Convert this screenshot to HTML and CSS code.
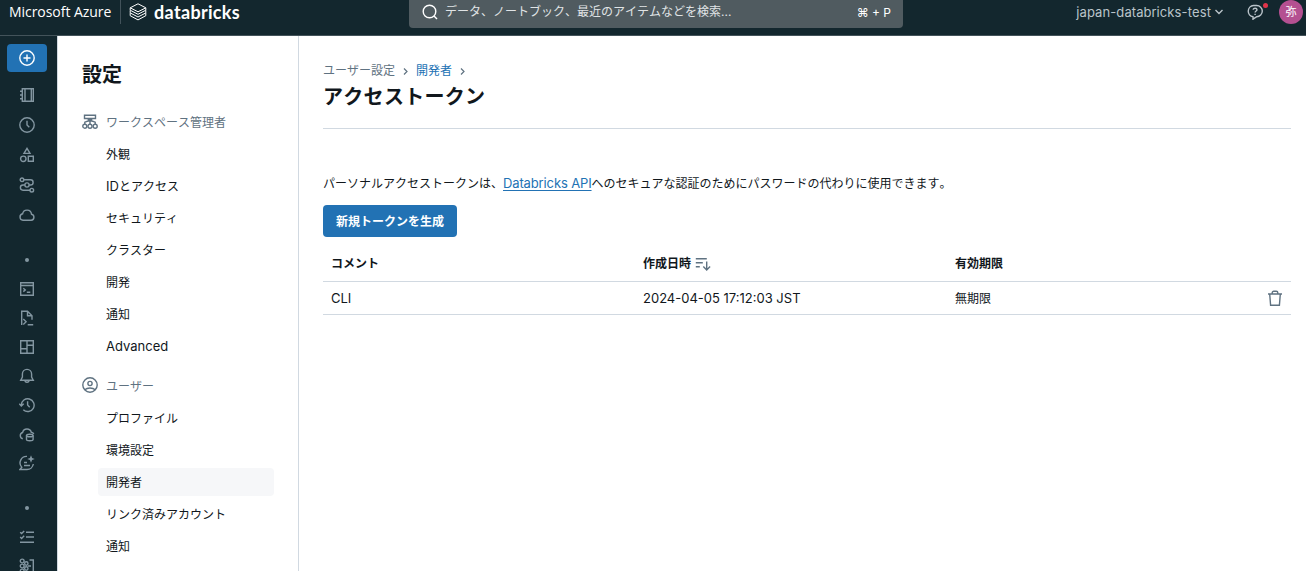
FILE: index.html
```html
<!DOCTYPE html>
<html lang="ja">
<head>
    <meta charset="UTF-8">
    <meta name="viewport" content="width=device-width, initial-scale=1.0">
    <title>アクセストークン - Databricks</title>
    <link rel="stylesheet" href="styles.css">
</head>
<body>
    <header class="topbar">
        <span class="azure">Microsoft Azure</span>
        <span class="brand">
            <svg class="brand-mark" viewBox="0 0 18 18">
                <path d="M1.200 4.800 9 .8l7.800 4L9 8.800zM1.200 4.800v2.400L9 11.300l7.800-4.100V4.800M1.200 7.400v2.500L9 14l7.800-4.100V7.400M1.200 10.100v2.600L9 16.900l7.800-4.200v-2.600"/>
            </svg>
            <span class="brand-name">databricks</span>
        </span>
        <div class="search">
            <svg class="search-icon" viewBox="0 0 16 16"><circle cx="7.500" cy="7.500" r="6.300"/><path d="m12 12 3 3"/></svg>
            <span class="search-text">データ、ノートブック、最近のアイテムなどを検索...</span>
            <span class="shortcut">⌘ + P</span>
        </div>
        <div class="account">
            <span class="workspace">japan-databricks-test</span>
            <svg class="chevron" viewBox="0 0 10 10"><path d="m1.500 3 3.500 3.500L8.500 3"/></svg>
            <span class="help">
                <svg class="help-icon" viewBox="0 0 16 16"><path d="M6 12.800A5.700 5.700 0 0 1 6.500 1.500h3.200a5.600 5.600 0 0 1 0 11.200L6 15.200z"/><path d="M6.200 5.800C6.200 3.600 10 3.700 10 5.800 10 7.100 8.100 7 8.100 8.600M8.100 9.700v1.200"/></svg>
                <span class="help-dot"></span>
            </span>
            <span class="avatar">弥</span>
        </div>
    </header>

    <div class="layout">
        <nav class="rail">
            <button class="new-button">
                <svg class="icon" viewBox="0 0 16 16"><circle cx="8" cy="8" r="7.200"/><path d="M8 4.500v7M4.500 8h7"/></svg>
            </button>
            <div class="rail-group rail-top">
                <a class="rail-item"><svg class="icon" viewBox="0 0 16 16"><path d="M3.300 1.700h11v12.600h-11zM6 1.700v12.600M12.300 1.700v12.600M1 4.300h2.300M1 8h2.300M1 11.700h2.300"/></svg></a>
                <a class="rail-item"><svg class="icon" viewBox="0 0 16 16"><circle cx="8" cy="8" r="7.200"/><path d="M8 3.700V8l2.300 2.300"/></svg></a>
                <a class="rail-item"><svg class="icon" viewBox="0 0 16 16"><path d="m8 1.400 3 5H5zM9.300 9.300h5v5h-5z"/><circle cx="4.300" cy="11.800" r="2.700"/></svg></a>
                <a class="rail-item"><svg class="icon" viewBox="0 0 16 16"><circle cx="3" cy="2.800" r="1.800"/><circle cx="8" cy="8" r="2.100"/><circle cx="12.800" cy="13.200" r="1.800"/><path d="M4.800 2.800h6.700a2.600 2.600 0 0 1 0 5.200h-1.400M5.900 8H4a2.600 2.600 0 0 0 0 5.200h7"/></svg></a>
                <a class="rail-item"><svg class="icon" viewBox="0 0 16 16"><path d="M4 13.300a3.300 3.300 0 0 1-.4-6.500 4.500 4.500 0 0 1 8.900.4 3.100 3.100 0 0 1-.3 6.100z"/></svg></a>
            </div>
            <div class="rail-dot"></div>
            <div class="rail-group">
                <a class="rail-item"><svg class="icon" viewBox="0 0 16 16"><path d="M1.700 1.700h12.600v12.600H1.700zM1.700 4.500h12.600M4.300 7.200l2 1.700-2 1.700M7.800 11.300h3.500"/></svg></a>
                <a class="rail-item"><svg class="icon" viewBox="0 0 16 16"><path d="M2.700 15V1.200h5.800l4.500 4.500v4M8.500 1.200v4.500H13M4.300 9l2.800 2.800L4.300 14.600M8.700 14.700h5.500"/></svg></a>
                <a class="rail-item"><svg class="icon" viewBox="0 0 16 16"><path d="M1.700 1.700h12.600v12.600H1.700zM8 1.700v12.600M1.700 9.800H8M8 6.300h6.300"/></svg></a>
                <a class="rail-item"><svg class="icon" viewBox="0 0 16 16"><path d="M1.700 12.300h12.600L12.600 9V6a4.600 4.600 0 0 0-9.200 0v3zM6 12.300a2 2 0 0 0 4 0"/></svg></a>
                <a class="rail-item"><svg class="icon" viewBox="0 0 16 16"><path d="M2.300 8a6.400 6.400 0 1 1 2 4.800M.3 6.700l2 2.300 2.400-2.300M8.600 4.300V8l2.100 2.200"/></svg></a>
                <a class="rail-item"><svg class="icon" viewBox="0 0 16 16"><path d="M3.800 12.700A3.200 3.200 0 0 1 3.600 6.500a4.500 4.500 0 0 1 8.700-.2c1.300.2 2.100.8 2.500 1.700"/><ellipse cx="10.800" cy="9.500" rx="3.300" ry="1.300"/><path d="M7.500 9.500v4c0 1.700 6.600 1.700 6.600 0v-4"/></svg></a>
                <a class="rail-item"><svg class="icon" viewBox="0 0 16 16"><path d="M8 1.400A6.500 6.500 0 0 0 2.800 12.300L1 14.500h7A6.500 6.500 0 0 0 14.300 9M5 7.500h3M5 10.500h6"/><path class="filled" d="m12 .2 1.100 2.700 2.700 1.100-2.700 1.100L12 7.800l-1.100-2.700L8.200 4l2.700-1.100z"/></svg></a>
            </div>
            <div class="rail-dot"></div>
            <div class="rail-group rail-ml">
                <a class="rail-item"><svg class="icon" viewBox="0 0 16 16"><path d="M7 3.300h8M7 8h8M1 13.300h14M1.200 3.200l1.400 1.400L5.200 2M1.200 8l1.400 1.400 2.600-2.600"/></svg></a>
                <a class="rail-item"><svg class="icon" viewBox="0 0 16 16"><circle cx="3.200" cy="3" r="1.900"/><circle cx="3.200" cy="8" r="1.900"/><circle cx="3.200" cy="13" r="1.900"/><circle cx="7.300" cy="5.500" r="1.700"/><circle cx="7.300" cy="10.500" r="1.700"/><path d="M10.500 2h3.800v12h-3.800M9 8h3"/></svg></a>
            </div>
        </nav>

        <aside class="settings">
            <h1 class="settings-title">設定</h1>
            <div class="section-head">
                <svg class="icon" viewBox="0 0 16 16"><path d="M2.500 1.200h11v3.300h-11zM8 4.500v5.700M2.800 10V8.200L6 7h4l3.200 1.200V10M5.500 4.500 8 7l2.500-2.500"/><circle cx="2.800" cy="12.200" r="2"/><circle cx="8" cy="12.200" r="2"/><circle cx="13.200" cy="12.200" r="2"/></svg>
                ワークスペース管理者
            </div>
            <ul class="section-list">
                <li>外観</li>
                <li><span class="latin">ID</span>とアクセス</li>
                <li>セキュリティ</li>
                <li>クラスター</li>
                <li>開発</li>
                <li>通知</li>
                <li><span class="latin">Advanced</span></li>
            </ul>
            <div class="section-head user-head">
                <svg class="icon" viewBox="0 0 16 16"><circle cx="8" cy="8" r="7.200"/><circle cx="8" cy="6.500" r="2.100"/><path d="M2.800 12.800c2.600-2.500 7.800-2.500 10.400 0"/></svg>
                ユーザー
            </div>
            <ul class="section-list">
                <li>プロファイル</li>
                <li>環境設定</li>
                <li class="active">開発者</li>
                <li>リンク済みアカウント</li>
                <li>通知</li>
            </ul>
        </aside>

        <main class="content">
            <div class="breadcrumb">
                <span>ユーザー設定</span>
                <svg class="crumb-arrow" viewBox="0 0 5 8"><path d="m1 1.500 3 3-3 3"/></svg>
                <a class="crumb-link">開発者</a>
                <svg class="crumb-arrow" viewBox="0 0 5 8"><path d="m1 1.500 3 3-3 3"/></svg>
            </div>
            <h2 class="page-title">アクセストークン</h2>
            <p class="description">パーソナルアクセストークンは、<a class="latin doc-link">Databricks API</a>へのセキュアな認証のためにパスワードの代わりに使用できます。</p>
            <button class="primary">新規トークンを生成</button>
            <div class="tokens">
                <div class="row head">
                    <span>コメント</span>
                    <span class="sortable">作成日時
                        <svg class="icon" viewBox="0 0 16 16"><path d="M.8 2.700h11M.8 6.700h7M.8 10.700h4M11.700 5.500v8.300M8.300 10.500l3.400 3.400 3.400-3.400"/></svg>
                    </span>
                    <span>有効期限</span>
                </div>
                <div class="row">
                    <span class="latin">CLI</span>
                    <span class="latin">2024-04-05 17:12:03 JST</span>
                    <span class="expiry">無期限</span>
                    <svg class="icon trash" viewBox="0 0 16 16"><path d="M1 4h14M5.200 4V2.800a1.500 1.500 0 0 1 1.500-1.500h2.600a1.500 1.500 0 0 1 1.500 1.500V4M2.700 4l.9 11.200h8.800L13.300 4"/></svg>
                </div>
            </div>
        </main>
    </div>
</body>
</html>
```
FILE: styles.css
```css
* {
    box-sizing: border-box;
}
body {
    margin: 0;
    height: 571px;
    overflow: hidden;
    display: flex;
    flex-direction: column;
    background: #fff;
    color: #11171c;
    font-family: Inter, "Noto Sans CJK JP", sans-serif;
    font-size: 12px;
    line-height: 20px;
    font-kerning: none;
}
svg {
    display: block;
    flex: none;
    fill: none;
    stroke: currentColor;
    stroke-width: 1.4;
}
.icon {
    width: 16px;
    height: 16px;
}
.filled {
    fill: currentColor;
    stroke: none;
}
.latin {
    font-size: 13px;
    line-height: 18px;
    font-kerning: normal;
}

/* top bar */
.topbar {
    display: flex;
    flex: none;
    height: 36px;
    padding: 0 3px 0 9px;
    background: #13272e;
    border-bottom: 1px solid #43535a;
    color: #fff;
}
.azure {
    width: 112px;
    height: 24px;
    line-height: 24px;
    font-family: "Open Sans", sans-serif;
    font-size: 14px;
    font-kerning: normal;
    letter-spacing: -0.05px;
    white-space: nowrap;
    border-right: 1px solid #42525a;
}
.brand {
    display: flex;
    align-items: center;
    width: 288px;
    height: 24px;
    padding-left: 8px;
    gap: 7px;
}
.brand-mark {
    width: 18px;
    height: 18px;
    stroke-width: 1;
}
.brand-name {
    font-family: Lato, sans-serif;
    font-size: 18px;
    font-weight: 700;
    line-height: 24px;
    letter-spacing: 0.3px;
}
.search {
    display: flex;
    align-items: center;
    width: 494px;
    height: 28px;
    padding: 0 12px 4px 13px;
    gap: 7px;
    background: #505b60;
    border-radius: 0 0 4px 4px;
}
.search-icon {
    width: 16px;
    height: 16px;
}
.search-text {
    color: #e0e4e6;
}
.shortcut {
    margin-left: auto;
    padding-top: 1px;
}
.account {
    display: flex;
    align-items: center;
    height: 24px;
    margin-left: auto;
    color: #bac4ca;
}
.workspace {
    font-size: 13px;
    letter-spacing: 0.1px;
}
.chevron {
    width: 10px;
    height: 10px;
    margin-left: 3px;
}
.help {
    position: relative;
    margin: 0 16px 0 23px;
}
.help-icon {
    width: 16px;
    height: 16px;
}
.help-dot {
    position: absolute;
    top: -1px;
    right: -5px;
    width: 5px;
    height: 5px;
    border-radius: 50%;
    background: #e0344a;
}
.avatar {
    width: 24px;
    height: 24px;
    border-radius: 50%;
    background: #b45091;
    color: #fff;
    font-size: 11px;
    text-align: center;
    line-height: 24px;
}

.layout {
    display: flex;
    flex: 1;
    min-height: 0;
}

/* icon rail */
.rail {
    width: 57px;
    padding: 8px 10px 0 7px;
    background: #13272e;
    color: #8396a1;
    overflow: hidden;
}
.new-button {
    display: flex;
    align-items: center;
    justify-content: center;
    width: 40px;
    height: 28px;
    padding: 0;
    border: none;
    border-radius: 4px;
    background: #2272b4;
    color: #fff;
}
.rail-item {
    display: flex;
    align-items: center;
    justify-content: center;
    height: 29.1px;
}
.rail-top {
    margin-top: 8px;
}
.rail-top .rail-item {
    height: 30px;
}
.rail-ml {
    margin-top: 13px;
}
.rail-dot {
    width: 4px;
    height: 4px;
    margin: 28px auto 12px;
    border-radius: 50%;
    background: #8396a1;
}

/* settings menu */
.settings {
    width: 242px;
    padding: 23px 24px 0;
    border-left: 1px solid #d1d9e1;
    border-right: 1px solid #d1d9e1;
}
.settings-title {
    margin: 0 0 15px;
    font-size: 20px;
    font-weight: 700;
    line-height: 32px;
}
.section-head {
    display: flex;
    align-items: center;
    gap: 8px;
    height: 32px;
    padding-top: 2px;
    color: #5f7281;
}
.section-head .icon {
    margin-top: -2px;
}
.user-head {
    margin-top: 9px;
    padding-top: 4px;
}
.user-head .icon {
    margin-top: -4px;
}
.section-list {
    display: flex;
    flex-direction: column;
    gap: 4px;
    margin: 2px 0 0 16px;
    padding: 0;
    list-style: none;
}
.user-head + .section-list {
    margin-top: 3px;
}
.section-list li {
    height: 28px;
    padding: 1px 8px 0;
    line-height: 28px;
    border-radius: 4px;
}
.section-list .active {
    background: #f6f7f9;
}

/* access tokens */
.content {
    flex: 1;
    padding: 25px 15px 0 24px;
}
.breadcrumb {
    display: flex;
    align-items: center;
    gap: 8px;
    color: #5f7281;
}
.crumb-arrow {
    width: 5px;
    height: 8px;
    stroke-width: 1.2;
}
.crumb-link {
    color: #2272b4;
}
.page-title {
    margin: 0;
    height: 48px;
    font-size: 20px;
    font-weight: 700;
    line-height: 32px;
    letter-spacing: 0.3px;
    border-bottom: 1px solid #d1d9e1;
}
.description {
    height: 20px;
    margin: 45px 0 11px;
}
.doc-link {
    color: #2272b4;
    letter-spacing: -0.13px;
    text-decoration: underline;
    text-underline-offset: 2px;
}
.primary {
    display: block;
    width: 134px;
    height: 32px;
    padding: 0 0 2px;
    border: none;
    border-radius: 4px;
    background: #2272b4;
    color: #fff;
    font-family: inherit;
    font-size: 12px;
    font-weight: 700;
}
.tokens {
    margin-top: 12px;
}
.row {
    display: grid;
    grid-template-columns: 312px 312px 1fr 16px;
    align-items: center;
    height: 33px;
    padding: 0 8px;
    border-bottom: 1px solid #d1d9e1;
}
.row.head {
    padding-bottom: 2px;
    font-weight: 700;
}
.expiry {
    padding-top: 2px;
}
.sortable {
    display: flex;
    align-items: center;
    gap: 4px;
}
.sortable .icon,
.trash {
    color: #5f7281;
}
```
